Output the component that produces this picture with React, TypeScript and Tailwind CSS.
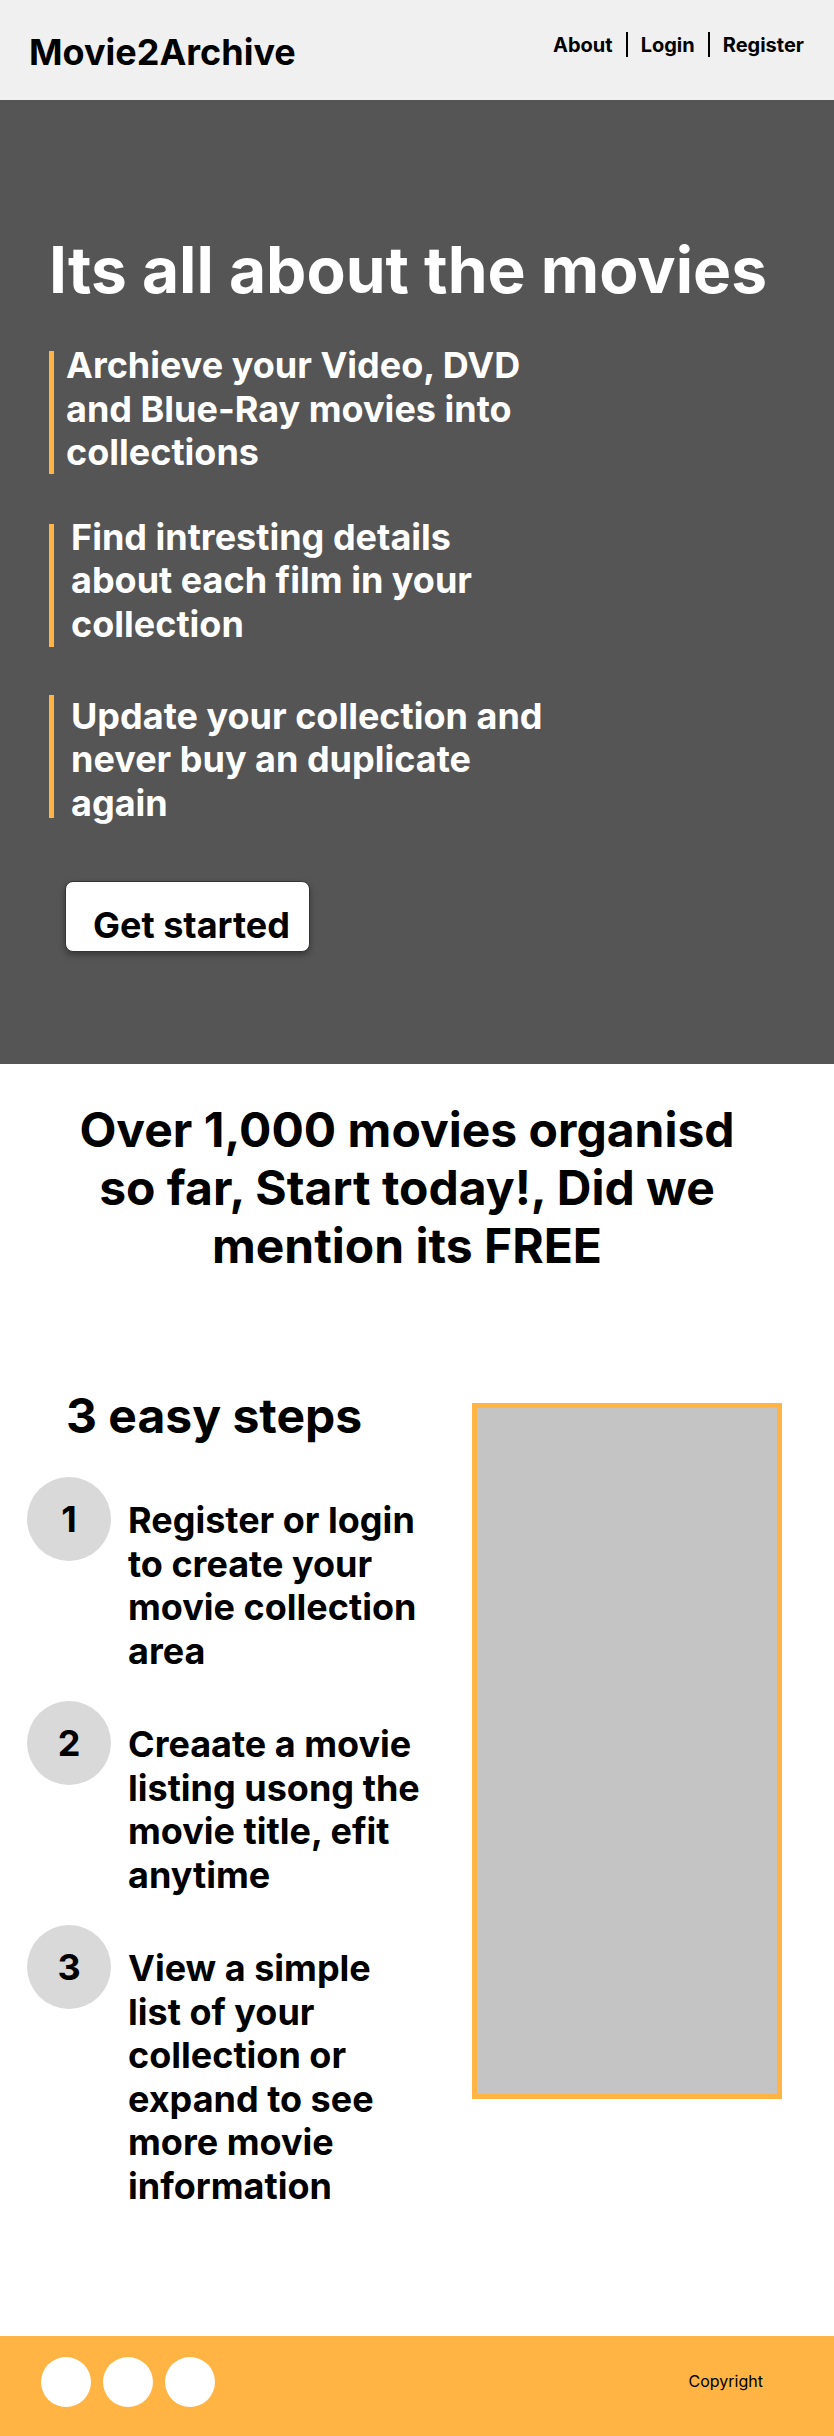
import React from 'react';

// each bullet keeps its own spacing, the design isn't on a strict grid
const bullets = [
  { lines: ['Archieve your Video, DVD', 'and Blue-Ray movies into', 'collections'], wrap: 'mt-[36px]', bar: 'mt-[7px]', gap: 'ml-[12px]' },
  { lines: ['Find intresting details', 'about each film in your', 'collection'], wrap: 'mt-[41px]', bar: 'mt-[8px]', gap: 'ml-[17px]' },
  { lines: ['Update your collection and', 'never buy an duplicate', 'again'], wrap: 'mt-[48px]', bar: 'mt-0', gap: 'ml-[17px]' },
];

const steps = [
  { n: '1', lines: ['Register or login', 'to create your', 'movie collection', 'area'] },
  { n: '2', lines: ['Creaate a movie', 'listing usong the', 'movie title, efit', 'anytime'] },
  { n: '3', lines: ['View a simple', 'list of your', 'collection or', 'expand to see', 'more movie', 'information'] },
];

function Lines({ lines }: { lines: string[] }) {
  return (
    <>
      {lines.map((l, i) => (
        <React.Fragment key={l}>
          {i > 0 && <br />}
          {l}
        </React.Fragment>
      ))}
    </>
  );
}

export default function App() {
  return (
    <div className="flex min-h-[2436px] w-[834px] flex-col bg-white font-['Inter',sans-serif] text-black">
      {/* Header */}
      <header className="flex h-[100px] items-start justify-between bg-[#f0f0f0] pl-[29px] pr-[30px]">
        <div className="pt-[30px] text-[36px] font-bold leading-[44px]">Movie2Archive</div>
        <nav className="mt-[32px] flex h-[25px] items-center text-[20px] font-bold leading-[24px]">
          <a href="#">About</a>
          <span className="mx-[13px] h-[25px] w-[2px] bg-black" />
          <a href="#">Login</a>
          <span className="mx-[13px] h-[25px] w-[2px] bg-black" />
          <a href="#">Register</a>
        </nav>
      </header>

      {/* Hero */}
      <section className="h-[964px] bg-[#555555] pl-[49px] pt-[131px] text-white">
        <h1 className="text-[64px] font-bold leading-[77px]">Its all about the movies</h1>

        {bullets.map((b) => (
          <div key={b.lines[0]} className={`flex ${b.wrap}`}>
            <div className={`h-[123px] w-[5px] shrink-0 bg-[#ffb443] ${b.bar}`} />
            <p className={`text-[36px] font-bold leading-[43.5px] ${b.gap}`}>
              <Lines lines={b.lines} />
            </p>
          </div>
        ))}

        <button className="ml-[16px] mt-[56px] block h-[71px] w-[245px] rounded-[8px] border border-[#333333] bg-white pl-[27px] pt-[18px] text-left text-[36px] font-bold leading-[43.5px] text-black shadow-[0_3px_6px_rgba(0,0,0,0.35)]">
          Get started
        </button>
      </section>

      {/* Tagline */}
      <section className="pl-[67px] pr-[87px] pt-[37px] text-center text-[48px] font-bold leading-[58px]">
        <Lines lines={['Over 1,000 movies organisd', 'so far, Start today!, Did we', 'mention its FREE']} />
      </section>

      {/* Steps */}
      <section className="flex pt-[112px]">
        <div className="w-[472px]">
          <h2 className="pl-[66px] text-[48px] font-bold leading-[58px]">3 easy steps</h2>
          <div className="mt-[32px] flex flex-col gap-[28px] pl-[27px]">
            {steps.map((s) => (
              <div key={s.n} className="flex items-start">
                <div className="flex h-[84px] w-[84px] shrink-0 items-center justify-center rounded-full bg-[#d9d9d9] text-[36px] font-bold">
                  {s.n}
                </div>
                <p className="ml-[17px] mt-[22px] text-[36px] font-bold leading-[43.5px]">
                  <Lines lines={s.lines} />
                </p>
              </div>
            ))}
          </div>
        </div>
        <div className="mt-[16px] h-[696px] w-[310px] border-[5px] border-[#ffb443] bg-[#c4c4c4]" />
      </section>

      {/* Footer */}
      <footer className="mt-auto flex h-[100px] items-start justify-between bg-[#ffb443] pl-[41px] pr-[71px]">
        <div className="flex gap-[12px] pt-[21px]">
          <span className="h-[50px] w-[50px] rounded-full bg-white" />
          <span className="h-[50px] w-[50px] rounded-full bg-white" />
          <span className="h-[50px] w-[50px] rounded-full bg-white" />
        </div>
        <div className="pt-[35px] text-[16px] leading-[20px]">Copyright</div>
      </footer>
    </div>
  );
}
